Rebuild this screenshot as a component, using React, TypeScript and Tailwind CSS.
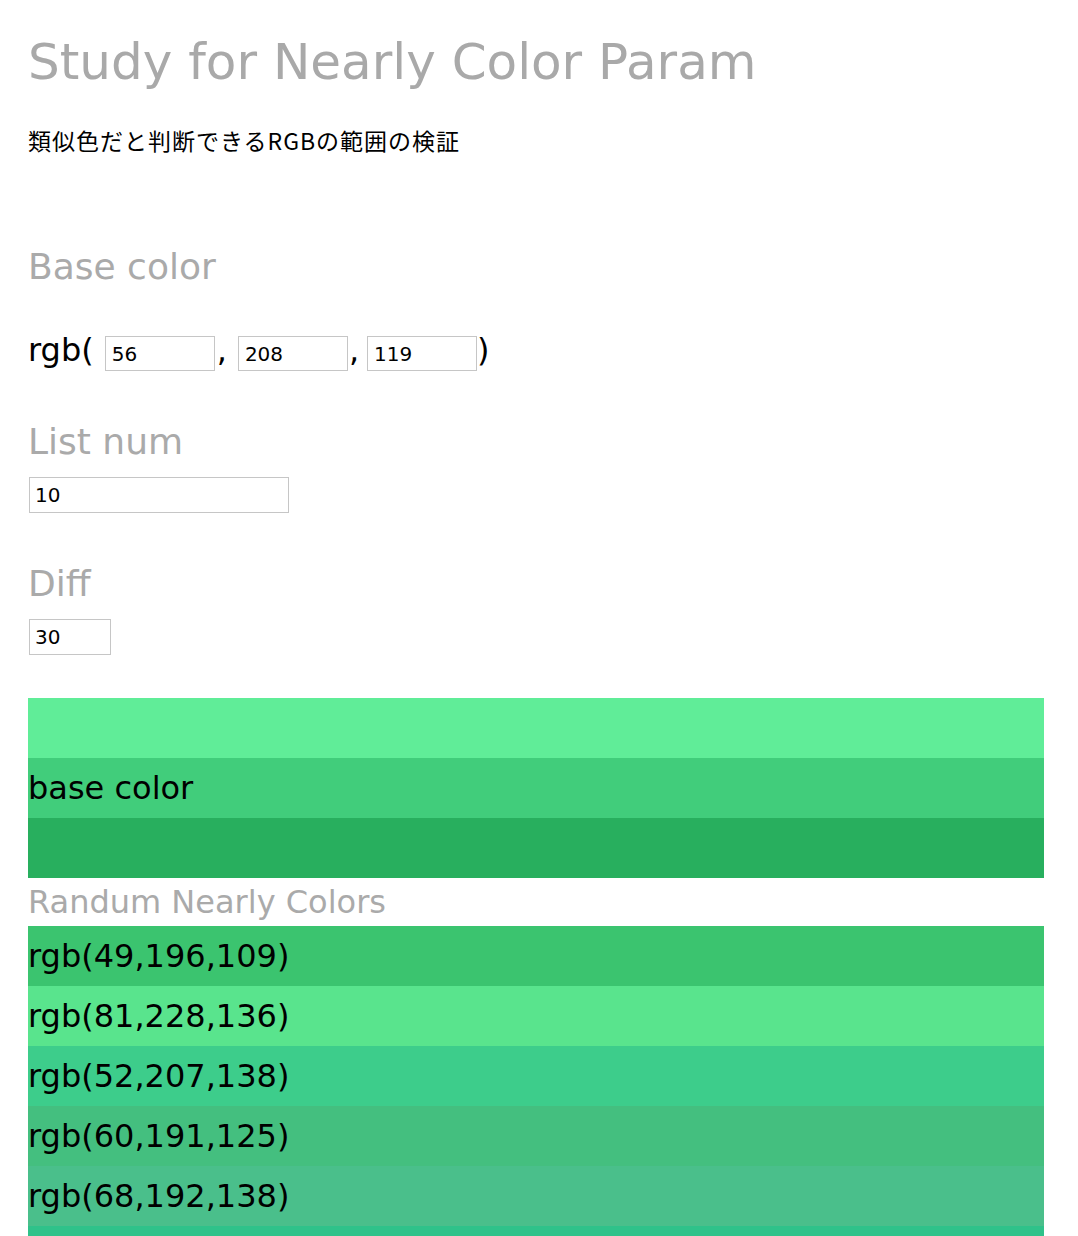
import React from 'react';

const randomColors = [
  { label: 'rgb(49,196,109)', bg: 'bg-[#3bc46f]' },
  { label: 'rgb(81,228,136)', bg: 'bg-[#59e48d]' },
  { label: 'rgb(52,207,138)', bg: 'bg-[#3dcd8b]' },
  { label: 'rgb(60,191,125)', bg: 'bg-[#44bf7f]' },
  { label: 'rgb(68,192,138)', bg: 'bg-[#4abf8b]' },
  { label: 'rgb(41,194,138)', bg: 'bg-[#2fc28a]' },
];

function Heading({ children, className = '' }: { children: React.ReactNode; className?: string }) {
  return <h2 className={`text-[36px] leading-[44px] text-[#aaaaaa] ${className}`}>{children}</h2>;
}

function RgbInput({ value }: { value: string }) {
  return (
    <input
      type="text"
      defaultValue={value}
      className="w-[110px] h-[35px] border border-[#c6c6c6] px-[6px] text-[20px] text-black outline-none"
    />
  );
}

export default function App() {
  return (
    <div
      className="min-h-screen bg-white pt-[32px] pl-[28px] text-black"
      style={{ fontFamily: '"DejaVu Sans", "Noto Sans CJK JP", sans-serif' }}
    >
      <h1 className="text-[50px] leading-[60px] font-normal text-[#a9a9a9]">
        Study for Nearly Color Param
      </h1>
      <p
        className="mt-[32px] text-[23px] leading-[32px] tracking-[1px]"
        style={{ fontFamily: '"Noto Sans CJK JP", sans-serif' }}
      >
        類似色だと判断できるRGBの範囲の検証
      </p>

      <Heading className="mt-[89px]">Base color</Heading>
      <div className="mt-[43px] flex items-center h-[35px] text-[32px]">
        <span>rgb(</span>
        <span className="ml-[11px]">
          <RgbInput value="56" />
        </span>
        <span className="ml-[2px]">,</span>
        <span className="ml-[11px]">
          <RgbInput value="208" />
        </span>
        <span className="ml-[1px]">,</span>
        <span className="ml-[8px]">
          <RgbInput value="119" />
        </span>
        <span>)</span>
      </div>

      <Heading className="mt-[53px]">List num</Heading>
      <input
        type="text"
        defaultValue="10"
        className="block mt-[13px] ml-px w-[260px] h-[36px] border border-[#c6c6c6] px-[5px] text-[20px] outline-none"
      />

      <Heading className="mt-[49px]">Diff</Heading>
      <input
        type="text"
        defaultValue="30"
        className="block mt-[13px] ml-px w-[82px] h-[36px] border border-[#c6c6c6] px-[5px] text-[20px] outline-none"
      />

      <div className="mt-[43px] w-[1016px]">
        <div className="h-[60px] bg-[#60ed98]" />
        <div className="h-[60px] bg-[#41cd7b] text-[32px] leading-[60px]">base color</div>
        <div className="h-[60px] bg-[#28af5e]" />
        <div className="text-[32px] leading-[48px] text-[#aaaaaa]">Randum Nearly Colors</div>
        {randomColors.map((c) => (
          <div key={c.label} className={`h-[60px] text-[32px] leading-[60px] ${c.bg}`}>
            {c.label}
          </div>
        ))}
      </div>
    </div>
  );
}
